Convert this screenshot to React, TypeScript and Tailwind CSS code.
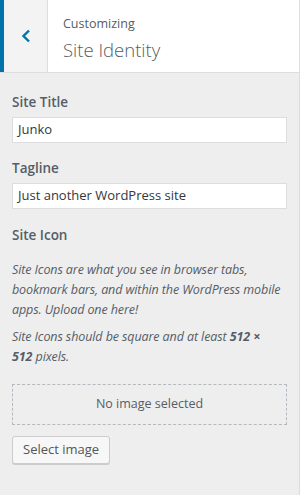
import React from "react";

function App() {
  return (
    <div
      className="w-[300px] h-[495px] bg-[#eeeeee] border-r border-[#dddddd] text-[#555d66] overflow-hidden"
      style={{ fontFamily: '"Open Sans", "Noto Sans", sans-serif' }}
    >
      <div className="flex h-[73px] bg-white border-b border-[#dddddd]">
        <button className="w-[48px] h-[72px] flex items-center justify-center bg-[#f3f3f3] border-l-4 border-[#0073aa] border-r border-r-[#dddddd] text-[#0073aa]">
          <svg width="10" height="14" viewBox="0 0 10 14" fill="none">
            <path d="M8 1.5L2.5 7L8 12.5" stroke="currentColor" strokeWidth="2.4" />
          </svg>
        </button>
        <div className="flex flex-col pl-[15px] pt-[14px]">
          <span className="text-[12.5px] leading-[20px] text-[#555d66]">Customizing</span>
          <span className="text-[18.5px] leading-[28px] font-light text-[#555d66] mt-[2px]">
            Site Identity
          </span>
        </div>
      </div>

      <div className="px-[12px] pt-[19px]">
        <div className="text-[13.5px] leading-[20px] font-semibold text-[#555d66]">Site Title</div>
        <div className="mt-[5px] h-[26px] bg-white border border-[#dddddd] flex items-center px-[5px] text-[13px] text-[#32373c]">
          Junko
        </div>

        <div className="mt-[15px] text-[13.5px] leading-[20px] font-semibold text-[#555d66]">Tagline</div>
        <div className="mt-[5px] h-[26px] bg-white border border-[#dddddd] flex items-center px-[5px] text-[13px] text-[#32373c]">
          Just another WordPress site
        </div>

        <div className="mt-[16px] text-[13.5px] leading-[20px] font-semibold text-[#555d66]">Site Icon</div>
        <p className="mt-[15px] text-[12.5px] leading-[20px] italic tracking-[-0.1px] text-[#555d66]">
          Site Icons are what you see in browser tabs, bookmark bars, and within the WordPress mobile apps. Upload one here!
        </p>
        <p className="mt-[7px] pr-[8px] text-[12.5px] leading-[20px] italic tracking-[-0.1px] text-[#555d66]">
          Site Icons should be square and at least <b className="font-bold">512 ×</b> <b className="font-bold">512</b> pixels.
        </p>

        <div className="mt-[17px] h-[41px] border border-dashed border-[#b4b9be] flex items-center justify-center text-[12.5px] text-[#555d66]">
          No image selected
        </div>

        <button className="mt-[11px] h-[28px] px-[10px] bg-[#f7f7f7] border border-[#cccccc] rounded-[3px] shadow-[0_1px_0_#cccccc] text-[13px] text-[#555555]">
          Select image
        </button>
      </div>
    </div>
  );
}

export default App;
